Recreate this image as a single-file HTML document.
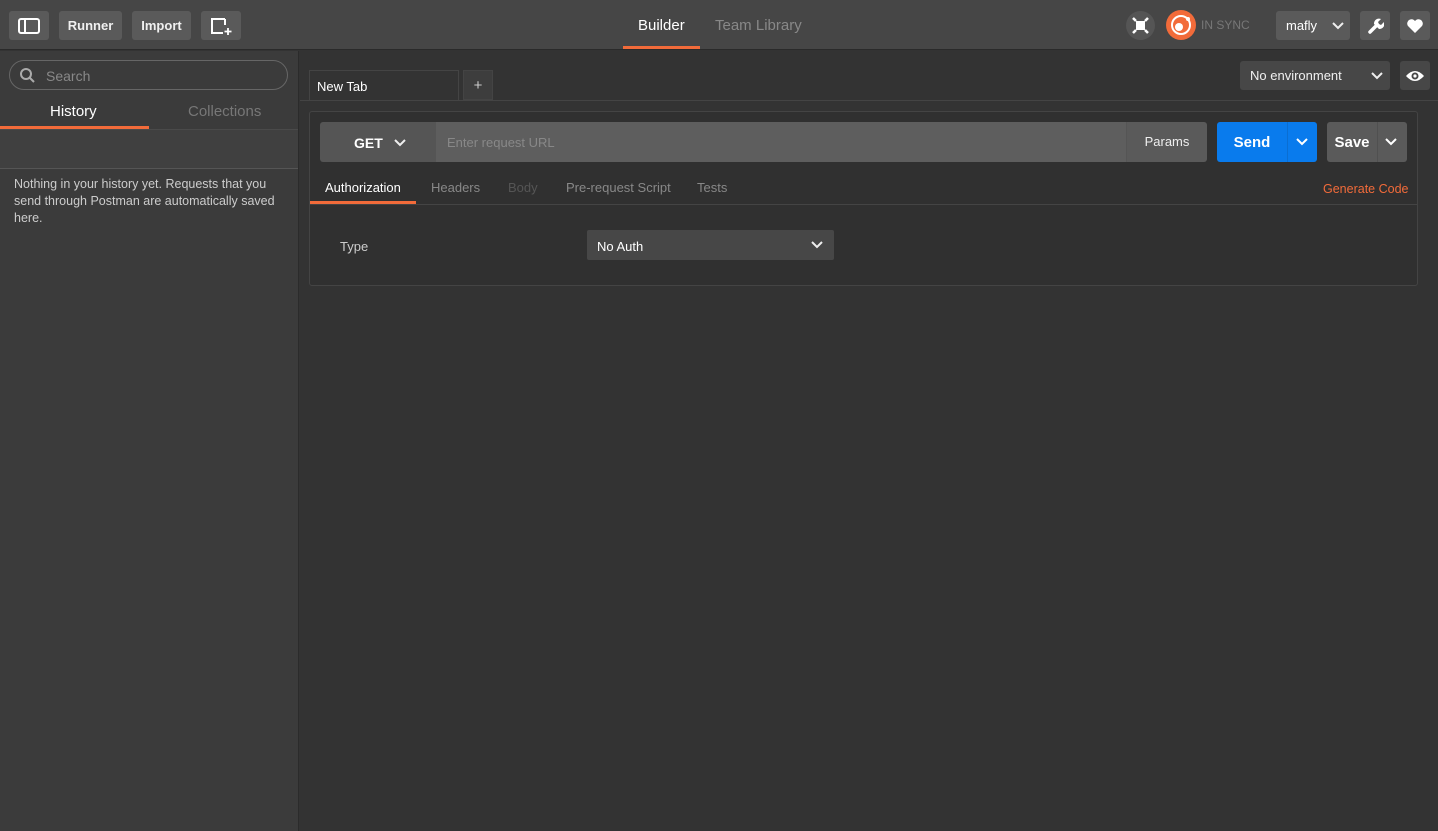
<!DOCTYPE html>
<html><head><meta charset="utf-8"><style>
*{box-sizing:border-box;margin:0;padding:0}
body{width:1438px;height:831px;overflow:hidden;background:#333;font-family:"Liberation Sans",sans-serif;font-size:13px;color:#ddd;position:relative}
.a{position:absolute}
.btn{position:absolute;background:#5a5a5a;border-radius:3px;color:#f0f0f0;font-weight:bold;font-size:13px;display:flex;align-items:center;justify-content:center}
</style></head><body>
<div class="a" style="left:0;top:0;width:1438px;height:50px;background:#464646;border-bottom:1px solid #2a2a2a"></div>
<div class="btn" style="left:9px;top:11px;width:40px;height:29px"><svg width="24" height="18"><rect x="2" y="2" width="20" height="14" rx="2" fill="none" stroke="#fff" stroke-width="2"/><line x1="8" y1="2" x2="8" y2="16" stroke="#fff" stroke-width="2"/></svg></div>
<div class="btn" style="left:59px;top:11px;width:63px;height:29px">Runner</div>
<div class="btn" style="left:132px;top:11px;width:59px;height:29px">Import</div>
<div class="btn" style="left:201px;top:11px;width:40px;height:29px"><svg width="24" height="20"><path d="M16 3H3v14h11M16 3v6" fill="none" stroke="#fff" stroke-width="2"/><path d="M19 12v7M15.5 15.5h7" stroke="#fff" stroke-width="1.8"/></svg></div>
<div class="a" style="left:638px;top:17px;color:#fff;font-size:15px">Builder</div>
<div class="a" style="left:623px;top:46px;width:77px;height:3px;background:#f26b3a"></div>
<div class="a" style="left:715px;top:17px;color:#888;font-size:15px">Team Library</div>
<div class="a" style="left:1126px;top:11px;width:29px;height:29px;border-radius:50%;background:#555"><svg width="29" height="29"><rect x="10" y="10" width="9" height="9" fill="#fff"/><path d="M7 7l3 3M22 7l-3 3M7 22l3-3M22 22l-3-3" stroke="#fff" stroke-width="2.5"/></svg></div>
<div class="a" style="left:1166px;top:10px;width:30px;height:30px;border-radius:50%;background:#f26b3a"><svg width="30" height="30"><circle cx="15" cy="15" r="9" fill="none" stroke="#fff" stroke-width="2"/><circle cx="13" cy="17" r="4" fill="#fff"/><circle cx="22" cy="9" r="2" fill="#fff"/></svg></div>
<div class="a" style="left:1201px;top:18px;color:#777;font-size:12px">IN SYNC</div>
<div class="btn" style="left:1276px;top:11px;width:74px;height:29px;justify-content:flex-start;padding-left:10px;font-weight:normal;color:#fff">mafly<svg style="margin-left:14px" width="14" height="10"><path d="M2 2l5 5 5-5" fill="none" stroke="#eee" stroke-width="2"/></svg></div>
<div class="btn" style="left:1360px;top:11px;width:30px;height:29px"><svg width="18" height="18"><path d="M4 15l6-6" stroke="#fff" stroke-width="3.5" stroke-linecap="round"/><path d="M8 7a5 5 0 0 1 7-5l-3 3 1 2 2 1 3-3a5 5 0 0 1-5 7z" fill="#fff"/></svg></div>
<div class="btn" style="left:1400px;top:11px;width:30px;height:29px"><svg width="18" height="16"><path d="M9 15L2 8a4 4 0 0 1 7-5a4 4 0 0 1 7 5z" fill="#fff"/></svg></div>
<div class="a" style="left:0;top:51px;width:299px;height:780px;background:#3b3b3b;border-right:1px solid #2b2b2b"></div>
<div class="a" style="left:9px;top:60px;width:279px;height:30px;border:1px solid #666;border-radius:15px"></div>
<svg class="a" style="left:19px;top:67px" width="18" height="18"><circle cx="7" cy="7" r="5" fill="none" stroke="#aaa" stroke-width="2"/><path d="M11 11l4 4" stroke="#aaa" stroke-width="2"/></svg>
<div class="a" style="left:46px;top:68px;color:#888;font-size:14px">Search</div>
<div class="a" style="left:50px;top:103px;color:#fff;font-size:15px">History</div>
<div class="a" style="left:188px;top:103px;color:#777;font-size:15px">Collections</div>
<div class="a" style="left:0;top:126px;width:149px;height:3px;background:#f26b3a"></div>
<div class="a" style="left:0;top:129px;width:298px;height:1px;background:#4a4a4a"></div>
<div class="a" style="left:0;top:130px;width:298px;height:39px;background:#404040;border-bottom:1px solid #555"></div>
<div class="a" style="left:14px;top:176px;width:275px;color:#ccc;font-size:12.5px;line-height:17px">Nothing in your history yet. Requests that you send through Postman are automatically saved here.</div>
<div class="a" style="left:309px;top:70px;width:150px;height:31px;background:#333;border:1px solid #444;border-bottom:none;color:#fff;padding:8px 7px">New Tab</div>
<div class="a" style="left:463px;top:70px;width:30px;height:30px;background:#3d3d3d;border:1px solid #444;color:#ccc;text-align:center;line-height:30px;font-size:15px">+</div>
<div class="a" style="left:300px;top:100px;width:1138px;height:1px;background:#444"></div>
<div class="btn" style="left:1240px;top:61px;width:150px;height:29px;background:#474747;font-weight:normal;justify-content:flex-start;padding-left:10px">No environment<svg style="margin-left:28px" width="14" height="10"><path d="M2 2l5 5 5-5" fill="none" stroke="#eee" stroke-width="2"/></svg></div>
<div class="btn" style="left:1400px;top:61px;width:30px;height:29px;background:#474747"><svg width="20" height="14"><path d="M1 7Q10-3 19 7Q10 17 1 7z" fill="#fff"/><circle cx="10" cy="7" r="3.5" fill="#474747"/><circle cx="10" cy="7" r="1.6" fill="#fff"/></svg></div>
<div class="a" style="left:309px;top:111px;width:1109px;height:175px;background:#303030;border:1px solid #444;border-radius:3px"></div>
<div class="a" style="left:320px;top:122px;width:116px;height:40px;background:#555;border-radius:3px 0 0 3px;color:#fff;font-weight:bold;font-size:14px;padding:13px 0 0 34px">GET<svg style="margin-left:10px" width="14" height="10"><path d="M2 2l5 5 5-5" fill="none" stroke="#eee" stroke-width="2"/></svg></div>
<div class="a" style="left:436px;top:122px;width:690px;height:40px;background:#5e5e5e;color:#888;padding:13px 11px;font-size:13px">Enter request URL</div>
<div class="a" style="left:1126px;top:122px;width:81px;height:40px;background:#5a5a5a;border-left:1px solid #555;border-radius:0 3px 3px 0;color:#eee;text-align:center;line-height:40px">Params</div>
<div class="a" style="left:1217px;top:122px;width:100px;height:40px;background:#097bed;border-radius:3px"></div>
<div class="a" style="left:1217px;top:123px;width:70px;height:40px;color:#fff;font-weight:bold;font-size:15px;text-align:center;line-height:40px">Send</div>
<div class="a" style="left:1287px;top:122px;width:1px;height:40px;background:#0a6ed2"></div>
<svg class="a" style="left:1295px;top:137px" width="14" height="10"><path d="M2 2l5 5 5-5" fill="none" stroke="#fff" stroke-width="2"/></svg>
<div class="a" style="left:1327px;top:122px;width:80px;height:40px;background:#5a5a5a;border-radius:3px"></div>
<div class="a" style="left:1327px;top:123px;width:50px;height:40px;color:#fff;font-weight:bold;font-size:15px;text-align:center;line-height:40px">Save</div>
<div class="a" style="left:1377px;top:122px;width:1px;height:40px;background:#505050"></div>
<svg class="a" style="left:1384px;top:137px" width="14" height="10"><path d="M2 2l5 5 5-5" fill="none" stroke="#fff" stroke-width="2"/></svg>
<div class="a" style="left:325px;top:180px;color:#fff">Authorization</div>
<div class="a" style="left:431px;top:180px;color:#888">Headers</div>
<div class="a" style="left:508px;top:180px;color:#555">Body</div>
<div class="a" style="left:566px;top:180px;color:#888">Pre-request Script</div>
<div class="a" style="left:697px;top:180px;color:#888">Tests</div>
<div class="a" style="left:1323px;top:182px;color:#f26b3a;font-size:12.5px">Generate Code</div>
<div class="a" style="left:310px;top:201px;width:106px;height:3px;background:#f26b3a"></div>
<div class="a" style="left:310px;top:204px;width:1107px;height:1px;background:#444"></div>
<div class="a" style="left:340px;top:239px;color:#ccc">Type</div>
<div class="a" style="left:587px;top:230px;width:247px;height:30px;background:#474747;border-radius:2px;color:#fff;padding:9px 10px">No Auth</div>
<svg class="a" style="left:810px;top:240px" width="14" height="10"><path d="M2 2l5 5 5-5" fill="none" stroke="#eee" stroke-width="2"/></svg>
</body></html>
